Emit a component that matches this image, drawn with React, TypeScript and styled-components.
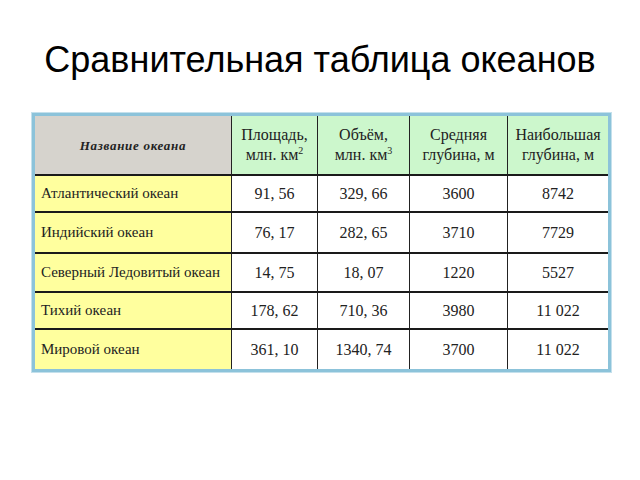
import React from "react";
import styled, { createGlobalStyle } from "styled-components";

const Global = createGlobalStyle`
  html, body { margin: 0; padding: 0; background: #ffffff; }
  body { width: 640px; height: 480px; overflow: hidden; }
`;

const Page = styled.div`
  display: flex;
  flex-direction: column;
  align-items: flex-start;
  width: 640px;
  height: 480px;
`;

const Title = styled.h1`
  margin: 36px 0 0 0;
  width: 640px;
  text-align: center;
  font-family: "Liberation Sans", Arial, sans-serif;
  font-weight: normal;
  font-size: 36px;
  line-height: 48px;
  color: #000;
`;

const Table = styled.div`
  margin: 29px 0 0 32px;
  display: grid;
  grid-template-columns: 197px 86px 92px 98px 100px;
  grid-template-rows: 60px 37px 41px 39px 37px 39px;
  border: 3px solid #8cc3da;
  box-shadow: 0 0 0 1px #c4e0ec;
  background: #fff;
`;

type CellProps = { $bg?: string; $last?: boolean; $lastRow?: boolean };

const Cell = styled.div<CellProps>`
  display: flex;
  align-items: center;
  justify-content: center;
  text-align: center;
  white-space: nowrap;
  background: ${(p) => p.$bg || "#ffffff"};
  border-right: ${(p) => (p.$last ? "none" : "1px solid #222")};
  border-bottom: ${(p) => (p.$lastRow ? "none" : "2px solid #1a1a1a")};
  font-family: "Liberation Serif", "Times New Roman", serif;
  font-size: 16px;
  line-height: 19px;
  color: #222;
  box-sizing: border-box;
`;

const HeadCell = styled(Cell)`
  font-size: 16px;
  line-height: 20px;
`;

const NameHead = styled(Cell)`
  font-weight: bold;
  font-style: italic;
  font-size: 13px;
  letter-spacing: 0.7px;
`;

const NameCell = styled(Cell)`
  justify-content: flex-start;
  padding-left: 6px;
  text-align: left;
  font-size: 15px;
`;

const Sup = styled.sup`
  font-size: 10px;
  line-height: 0;
  vertical-align: 6px;
`;

const GREY = "#d6d3cd";
const GREEN = "#ccf7cc";
const YELLOW = "#ffff9e";

const rows: string[][] = [
  ["Атлантический океан", "91, 56", "329, 66", "3600", "8742"],
  ["Индийский океан", "76, 17", "282, 65", "3710", "7729"],
  ["Северный Ледовитый океан", "14, 75", "18, 07", "1220", "5527"],
  ["Тихий океан", "178, 62", "710, 36", "3980", "11 022"],
  ["Мировой океан", "361, 10", "1340, 74", "3700", "11 022"],
];

export default function App() {
  return (
    <Page>
      <Global />
      <Title>Сравнительная таблица океанов</Title>
      <Table>
        <NameHead $bg={GREY}>Название океана</NameHead>
        <HeadCell $bg={GREEN}>
          <span>
            Площадь,
            <br />
            млн. км<Sup>2</Sup>
          </span>
        </HeadCell>
        <HeadCell $bg={GREEN}>
          <span>
            Объём,
            <br />
            млн. км<Sup>3</Sup>
          </span>
        </HeadCell>
        <HeadCell $bg={GREEN}>
          <span>
            Средняя
            <br />
            глубина, м
          </span>
        </HeadCell>
        <HeadCell $bg={GREEN} $last>
          <span>
            Наибольшая
            <br />
            глубина, м
          </span>
        </HeadCell>
        {rows.map((r, i) => {
          const lastRow = i === rows.length - 1;
          return (
            <React.Fragment key={r[0]}>
              <NameCell $bg={YELLOW} $lastRow={lastRow}>
                {r[0]}
              </NameCell>
              {r.slice(1).map((v, j) => (
                <Cell key={j} $last={j === 3} $lastRow={lastRow}>
                  {v}
                </Cell>
              ))}
            </React.Fragment>
          );
        })}
      </Table>
    </Page>
  );
}
